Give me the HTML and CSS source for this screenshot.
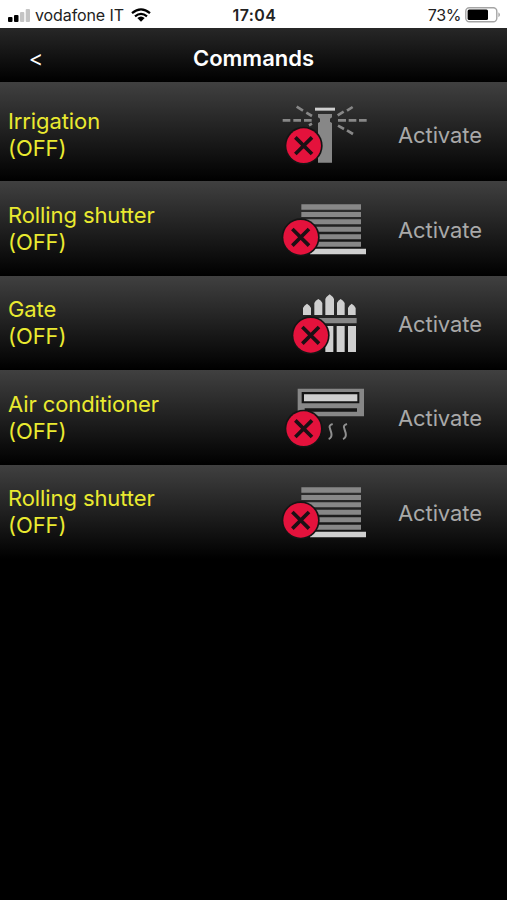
FILE: index.html
```html
<!DOCTYPE html>
<html lang="en">
<head>
    <meta charset="UTF-8">
    <meta name="viewport" content="width=device-width, initial-scale=1.0">
    <title>Commands</title>
    <link rel="stylesheet" href="styles.css">
</head>
<body>
    <svg class="hidden">
        <symbol id="off-badge" viewBox="0 0 118 118">
            <circle cx="59" cy="59" r="57" fill="#141414"/>
            <circle cx="59" cy="59" r="52" fill="#e4123c"/>
            <path d="M34 34L84 84M84 34L34 84" stroke="#1b1014" stroke-width="11"/>
        </symbol>
        <symbol id="shutter" viewBox="0 -4 330 270">
            <path d="M94 57h179v16H94zM94 80h179v15H94zM94 102h179v15H94zM94 124h179v15H94zM94 147h179v15H94zM94 169h179v15H94z" fill="#878787"/>
            <path d="M120 190h168v17H120z" fill="#cfcfcf"/>
            <use href="#off-badge" x="33" y="97" width="118" height="118"/>
        </symbol>
    </svg>

    <div class="status-bar">
        <div class="carrier">
            <svg class="signal" width="22" height="13" viewBox="0 0 22 13">
                <rect x="0" y="8" width="4.5" height="5" rx="1"/>
                <rect x="6" y="6" width="4.5" height="7" rx="1"/>
                <rect x="12" y="3" width="4.3" height="10" rx="1" fill="#c4c4c4"/>
                <rect x="17.7" y="0" width="4.3" height="13" rx="1" fill="#c4c4c4"/>
            </svg>
            <span>vodafone IT</span>
            <svg class="wifi" width="20" height="14" viewBox="0 0 20 14">
                <path d="M1 5.2Q10 -2.6 19 5.2M4 8.4Q10 3.2 16 8.4" fill="none" stroke="#000" stroke-width="2.2"/>
                <path d="M6.3 10Q10 7 13.7 10L10 13.8z"/>
            </svg>
        </div>
        <div class="time">17:04</div>
        <div class="battery">
            <span>73%</span>
            <svg width="36" height="16" viewBox="0 0 36 16">
                <rect x="0.8" y="0.8" width="31" height="14" rx="3.5" fill="none" stroke="#a5a5a5" stroke-width="1.4"/>
                <rect x="2.6" y="2.6" width="20.4" height="10.4" rx="1.5"/>
                <path d="M33.4 5.3Q36.6 7.8 33.4 10.3z" fill="#a5a5a5"/>
            </svg>
        </div>
    </div>

    <div class="header">
        <a class="back">&lt;</a>
        <h1>Commands</h1>
    </div>

    <div class="commands">
        <div class="command">
            <div class="name">Irrigation<br>(OFF)</div>
            <svg class="icon" viewBox="0 -2 330 270">
                <path d="M135 54h60v9h-60z" fill="#cfcfcf"/>
                <path d="M144 73h42v10l-6 4v9l6 4v119h-42V100l6-4v-9l-6-4z" fill="#878787"/>
                <path d="M38 92h23M70 92h23M102 92h23M204 92h24M236 92h23M267 92h23M80 51l19 12M109 69l17 10M203 77l18-11M231 63l17-11M204 108l18 10M231 122l18 11M117 107l9-5" stroke="#878787" stroke-width="8"/>
                <use href="#off-badge" x="42" y="109" width="118" height="118"/>
            </svg>
            <div class="action">Activate</div>
        </div>
        <div class="command">
            <div class="name">Rolling shutter<br>(OFF)</div>
            <svg class="icon"><use href="#shutter"/></svg>
            <div class="action">Activate</div>
        </div>
        <div class="command">
            <div class="name">Gate<br>(OFF)</div>
            <svg class="icon" viewBox="0 -6 330 270">
                <path d="M99 105V84q3-8 12-13 9 5 12 13v21zM133 105V69q3-7 12-12 9 5 12 12v36zM166 105V57q3-7 13-14 10 7 13 14v48zM201 105V69q3-7 11-12 8 5 12 12v36zM234 105V84q3-8 11-13 9 5 12 13v21zM166 138h24v78h-24zM200 138h24v78h-24zM234 138h24v78h-24z" fill="#cfcfcf"/>
                <path d="M99 114h161v16H99z" fill="#878787"/>
                <use href="#off-badge" x="63" y="107" width="118" height="118"/>
            </svg>
            <div class="action">Activate</div>
        </div>
        <div class="command">
            <div class="name">Air conditioner<br>(OFF)</div>
            <svg class="icon" viewBox="0 -8 330 270">
                <path d="M83 42h199v83H83z" fill="#878787"/>
                <path d="M95 52h173v34H95zM104 101h157v10H104z" fill="#151515"/>
                <path d="M102 59h160v21H102z" fill="#cfcfcf"/>
                <path d="M188 148q-13 4-8 14l4 13q3 14-8 18M231 148q-13 4-8 14l4 13q3 14-8 18" fill="none" stroke="#909090" stroke-width="6"/>
                <use href="#off-badge" x="42" y="103" width="118" height="118"/>
            </svg>
            <div class="action">Activate</div>
        </div>
        <div class="command">
            <div class="name">Rolling shutter<br>(OFF)</div>
            <svg class="icon"><use href="#shutter"/></svg>
            <div class="action">Activate</div>
        </div>
    </div>
</body>
</html>
```

FILE: styles.css
```css
body {
    font-family: Inter, "Liberation Sans", sans-serif;
    margin: 0;
    min-height: 100vh;
    background-color: #000;
}
.hidden {
    display: none;
}
.status-bar {
    display: grid;
    grid-template-columns: 1fr auto 1fr;
    align-items: center;
    height: 28px;
    padding: 2px 6px 0 8px;
    box-sizing: border-box;
    background-color: #fff;
    color: #222;
    font-size: 16px;
}
.carrier,
.battery {
    display: flex;
    align-items: center;
}
.carrier span {
    margin: 0 7px 0 5px;
    letter-spacing: -0.1px;
}
.battery {
    justify-content: flex-end;
    gap: 4px;
}
.battery span {
    letter-spacing: -0.4px;
}
.time {
    font-weight: 600;
    letter-spacing: 0.4px;
}
.header {
    display: grid;
    grid-template-columns: 72px 1fr 72px;
    align-items: center;
    height: 54px;
    padding-top: 6px;
    box-sizing: border-box;
    background: linear-gradient(#272727, #000);
    color: #fff;
    text-align: center;
}
.back {
    font-size: 22px;
}
h1 {
    margin: 0;
    font-size: 22px;
    font-weight: 600;
}
.command {
    display: grid;
    grid-template-columns: 262px 110px auto;
    align-items: center;
    height: 94.4px;
    padding-left: 8px;
    background: linear-gradient(#404040, #000);
    font-size: 22px;
    letter-spacing: -0.1px;
}
.command:first-child {
    padding-top: 5px;
}
.name {
    padding-top: 1px;
    color: #eaea30;
    line-height: 27px;
}
.icon {
    width: 110px;
    height: 90px;
}
.action {
    padding: 2px 0 0 18px;
    color: #a9a9a9;
}
```
